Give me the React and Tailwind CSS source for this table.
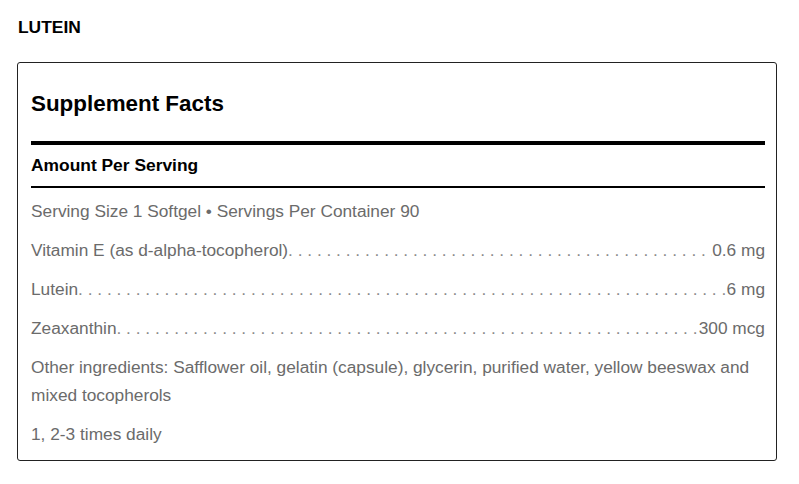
import React from "react";

const rows = [
  { label: "Vitamin E (as d-alpha-tocopherol)", value: "0.6 mg" },
  { label: "Lutein", value: "6 mg" },
  { label: "Zeaxanthin", value: "300 mcg" },
];

const dots = ". ".repeat(120);

export default function App() {
  return (
    <div className="min-h-screen bg-white pt-[15px] pl-[17px] font-['Liberation_Sans',Arial,sans-serif]">
      <h2 className="ml-px text-[17.4px] leading-[24px] font-bold text-black">LUTEIN</h2>

      {/* Facts card */}
      <div className="mt-[23px] w-[760px] rounded-[3px] border border-[#222] pt-[27px] pr-[11px] pb-[12px] pl-[13px]">
        <h3 className="text-[22.4px] leading-[28px] font-bold text-black">Supplement Facts</h3>
        <div className="mt-[23px] h-[4px] bg-black"></div>
        <div className="pt-[8px] pb-[9px] text-[17.4px] leading-[24px] font-bold text-black">Amount Per Serving</div>
        <div className="h-[2px] bg-black"></div>

        <div className="mt-[9px] flex flex-col gap-[11px] text-[17.3px] leading-[28px] text-[#6b6b6b]">
          <p>Serving Size 1 Softgel • Servings Per Container 90</p>
          {rows.map((r) => (
            <div key={r.label} className="flex">
              <span className="shrink-0 whitespace-nowrap">{r.label}</span>
              <span className="min-w-0 flex-1 overflow-hidden whitespace-nowrap text-[#8a8a8a]">{dots}</span>
              <span className="shrink-0 whitespace-nowrap">{r.value}</span>
            </div>
          ))}
          <p>
            Other ingredients: Safflower oil, gelatin (capsule), glycerin, purified water, yellow beeswax and
            mixed tocopherols
          </p>
          <p>1, 2-3 times daily</p>
        </div>
      </div>
    </div>
  );
}
